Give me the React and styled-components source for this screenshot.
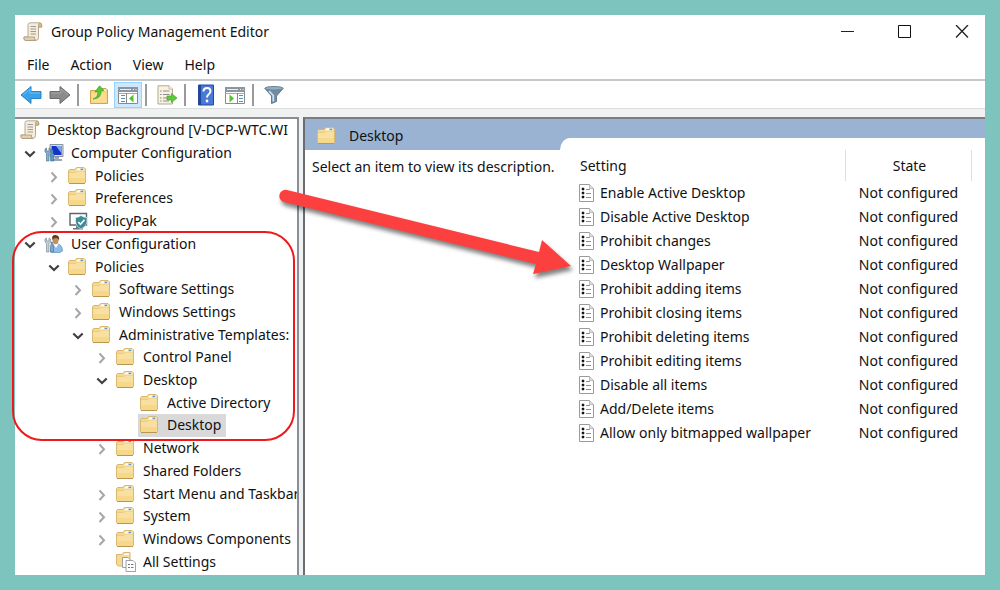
import React from "react";
import styled, { createGlobalStyle } from "styled-components";

const GlobalStyle = createGlobalStyle`
  * { box-sizing: border-box; }
  body {
    margin: 0;
    font-family: "Noto Sans", "Open Sans", sans-serif;
    font-size: 14px;
    line-height: 20px;
    color: #111;
  }
  button { font: inherit; color: inherit; border: 0; background: none; padding: 0; }
`;

const Page = styled.div`
  min-height: 100vh;
  padding: 15px;
  display: flex;
  background: #7dc4bf;
`;

const Window = styled.main`
  position: relative;
  flex: 1;
  min-width: 0;
  display: flex;
  flex-direction: column;
  background: #fff;
`;

const TitleBar = styled.header`
  display: flex;
  align-items: center;
  height: 34px;
  padding-left: 8px;
`;

const Title = styled.h1`
  flex: 1;
  margin: 0 0 0 8px;
  font-size: 14px;
  font-weight: 400;
`;

const CaptionButtons = styled.div`
  display: flex;
  margin-right: -5px;
`;

const CaptionButton = styled.button`
  width: 57px;
  height: 34px;
  display: flex;
  align-items: center;
  justify-content: center;
`;

const MenuBar = styled.nav`
  display: flex;
  align-items: center;
  gap: 21px;
  height: 30px;
  padding: 2px 0 0 12px;
`;

const MenuButton = styled.button`
  height: 24px;
`;

const Toolbar = styled.div`
  display: flex;
  align-items: center;
  gap: 1px;
  height: 30px;
  padding: 1px 2px 0;
  border-top: 2px solid #c6c9cb;
  border-bottom: 1px solid #dcdede;
`;

const ToolButton = styled.button`
  width: 28px;
  height: 26px;
  display: flex;
  align-items: center;
  justify-content: center;
  background: ${(p) => (p.$active ? "#cce8ff" : "transparent")};
  border: 1px solid ${(p) => (p.$active ? "#99d1ff" : "transparent")};
`;

const Divider = styled.span`
  width: 2px;
  height: 22px;
  margin: 0 5px 0 2px;
  background: #9a9a9a;
`;

const Workspace = styled.div`
  flex: 1;
  display: grid;
  grid-template-columns: 284px minmax(0, 1fr);
  column-gap: 4px;
  padding-top: 8px;
  background: #f0f1f1;
`;

const TreePane = styled.aside`
  min-width: 0;
  display: flex;
  background: #fff;
  border-top: 2px solid #8b8d92;
  border-right: 2px solid #8b8d98;
`;

const Tree = styled.ul`
  flex: 1;
  min-width: 0;
  margin: 0;
  padding: 0 0 2px;
  list-style: none;
  display: grid;
  grid-auto-rows: minmax(22px, 1fr);
  overflow: hidden;
`;

const TreeRow = styled.li`
  display: flex;
  align-items: stretch;
  padding-left: ${(p) => (p.$level ? p.$level * 24 - 16 : 3)}px;
  white-space: nowrap;
`;

const Twisty = styled.button`
  flex: none;
  width: 14px;
  margin-right: 5px;
  display: flex;
  align-items: center;
  justify-content: center;
`;

const TwistySpace = styled.span`
  flex: none;
  width: 19px;
`;

const Node = styled.button`
  display: flex;
  flex: none;
  align-items: center;
  gap: 7px;
  padding: 0 5px 0 2px;
  background: ${(p) => (p.$selected ? "#d9d9d9" : "transparent")};
`;

const Details = styled.section`
  min-width: 0;
  display: grid;
  grid-template-columns: 255px minmax(0, 1fr);
  background: #9ab3d2;
  border-top: 2px solid #7b7d80;
  border-left: 2px solid #6b6d72;
`;

const Description = styled.div`
  display: flex;
  flex-direction: column;
`;

const DetailsTitle = styled.h2`
  display: flex;
  align-items: center;
  gap: 12px;
  height: 31px;
  margin: 0;
  padding: 2px 0 0 12px;
  font-size: 14px;
  font-weight: 400;
`;

const DescriptionText = styled.p`
  flex: 1;
  margin: 0;
  padding: 7px 0 0 7px;
  background: #fff;
  white-space: nowrap;
`;

const Sheet = styled.div`
  margin-top: 19px;
  padding: 12px 13px 0 18px;
  background: #fff;
  border-top-left-radius: 10px 12px;
`;

const SettingsTable = styled.table`
  width: 100%;
  table-layout: fixed;
  border-collapse: collapse;
`;

const HeadCell = styled.th`
  width: ${(p) => p.$width || "auto"};
  height: 31px;
  padding: 0 0 0 2px;
  border-right: 1px solid #dedede;
  font-weight: 400;
  text-align: ${(p) => p.$align || "left"};
`;

const Cell = styled.td`
  height: 24px;
  padding: 0;
  text-align: ${(p) => p.$align || "left"};
  white-space: nowrap;
`;

const SettingName = styled.span`
  display: flex;
  align-items: center;
  gap: 6px;
`;

const Highlight = styled.div`
  position: absolute;
  left: -3px;
  top: 216px;
  width: 283px;
  height: 210px;
  border: 2px solid #f01818;
  border-radius: 30px;
  pointer-events: none;
`;

const Pointer = styled.svg`
  position: absolute;
  left: 255px;
  top: 165px;
  pointer-events: none;
  filter: drop-shadow(2px 4px 2px rgba(0, 0, 0, 0.5));
`;

const ScrollIcon = () => (
  <svg width="20" height="20" viewBox="0 0 20 20" aria-hidden="true">
    <path d="M5 2.500Q5.500.8 7.500.8H16Q18.700.8 18.700 3V5H15.500V15.500Q15.500 18.500 12.500 18.500H3Q1 18.500 1 16.500V15H5Z" fill="#f5edda" stroke="#b8a88f" />
    <path d="M1 15H11.500Q10.800 18 13 18.300L3 18.500Q1 18.500 1 16.500Z" fill="#e3d2ae" stroke="#a8977d" strokeWidth=".8" />
    <path d="M15.500 5V3Q15.700 1 17 1Q18.700 1.200 18.700 3V5Z" fill="#d8bd89" stroke="#a8977d" strokeWidth=".7" />
    <path d="M7.500 4.500H13M7.500 7H13M7.500 9.500H13M7.500 12H13" stroke="#9a9ba3" strokeWidth="1.100" />
  </svg>
);

const FolderShape = () => (
  <>
    <path d="M1.500 5L2.500 3.500H8L9.500 1.500H17L18.500 3V16.500L17.500 17.500H2.500L1.500 16.500Z" fill="#f5d98f" stroke="#d9b96f" />
    <path d="M10.500 2.300H16.500L17.500 3.500V5H9.200Z" fill="#fffdf2" />
    <path d="M13.500 2.600H16.300V4.200H13.500Z" fill="#5c97cd" />
    <path d="M2.300 6.500H8.500L10 5H17.700V16.500H2.300Z" fill="#fae0a0" />
    <path d="M2.300 12H17.700V16.700H2.300Z" fill="#f4d27d" opacity=".6" />
    <path d="M2 6.500H8.500L10 5H18" fill="none" stroke="#e6c67f" strokeWidth=".8" />
    <path d="M2 17.500H18" stroke="#b99651" />
  </>
);

const FolderIcon = () => (
  <svg width="20" height="20" viewBox="1 0 20 20" aria-hidden="true"><FolderShape /></svg>
);

const ComputerIcon = () => (
  <svg width="20" height="20" viewBox="0 0 20 20" aria-hidden="true">
    <path d="M6 1.500H19V13.500H6Z" fill="#d9dde3" stroke="#8c929c" />
    <path d="M7.500 3H17.600V12H7.500Z" fill="#1533c8" />
    <path d="M12 3H17.600V10.500Z" fill="#78a9ef" />
    <path d="M11 14H15V16H18V18H9V16H11Z" fill="#a1a7b0" />
    <path d="M1 6V9L2.500 10.500V18H5V10.500L6.500 9V6L5 5V8H2.500V5Z" fill="#87aeca" stroke="#587991" strokeWidth=".7" />
    <path d="M7 7H9V11H10V18H6.500V11H7Z" fill="#5698ca" stroke="#3d6f99" strokeWidth=".6" />
  </svg>
);

const UserIcon = () => (
  <svg width="20" height="20" viewBox="0 0 20 20" aria-hidden="true">
    <path d="M6.500 18Q7 11 10 10H14Q18.300 11 18.500 17L16 18.500H8Z" fill="#8dbce8" stroke="#5a8fbe" strokeWidth=".7" />
    <path d="M9.500 10L12 14L14.500 10Z" fill="#fff" />
    <ellipse cx="11.500" cy="6" rx="3" ry="4.200" fill="#c6905d" />
    <path d="M8.500 6Q7 .8 11.500 1Q16 1 15 7Q14.500 4 12 4Q9.500 4 8.500 6Z" fill="#5c3d27" />
    <path d="M1 5V8L2.500 9.500V18H5V9.500L6.500 8V5L5 4V7H2.500V4Z" fill="#c2ced8" stroke="#7b8f9f" strokeWidth=".7" />
    <path d="M7 8H8.500V11.500H9.500V18H6.500V11.500H7Z" fill="#82a6c3" stroke="#547793" strokeWidth=".6" />
  </svg>
);

const PolicyPakIcon = () => (
  <svg width="20" height="20" viewBox="0 0 20 20" aria-hidden="true">
    <path d="M2 2.500H18.500V14H2Z" fill="#fff" stroke="#5d666b" strokeWidth="1.400" />
    <path d="M8 14.500H12V17H15V18.500H5V17H8Z" fill="#6e777b" />
    <path d="M13 4.500Q15.500 6.500 19 6.500V10.500Q18.500 15.500 13 18Q8 15.500 7.500 10.500V6.500Q10.500 6.500 13 4.500Z" fill="#378d98" stroke="#fff" strokeWidth=".6" />
    <path d="M10.300 11L12.500 13.300L16.500 8.800" fill="none" stroke="#fff" strokeWidth="1.700" />
  </svg>
);

const AllSettingsIcon = () => (
  <svg width="20" height="20" viewBox="0 0 20 20" aria-hidden="true">
    <path d="M.5 2.500H6L7.500.5H14V14H2L.5 12.500Z" fill="#f6da91" stroke="#d9b96f" />
    <path d="M8.500 1.500H13V3H8Z" fill="#fff" />
    <path d="M6.500 5.500H12L14 7.500V15.500H6.500Z" fill="#fff" stroke="#a0a0a0" />
    <path d="M10 8.500H17L19.500 11V19.500H10Z" fill="#fff" stroke="#a0a0a0" />
    <path d="M12 12.500H14M15 12.500H17.500M12 15.500H14M15 15.500H17.500" stroke="#777" />
  </svg>
);

const PolicyIcon = () => (
  <svg width="16" height="20" viewBox="0 0 16 20" aria-hidden="true">
    <path d="M1.500 1.500H11.500L15.500 5.500V18.500H1.500Z" fill="#fff" stroke="#9a9a9a" />
    <path d="M11.500 1.500V5.500H15.500" fill="#e4e4e4" stroke="#bbb" />
    <path d="M4 5H6V7H4ZM4 9H6V11H4ZM4 13H6V15H4Z" fill="#151515" stroke="#151515" strokeWidth=".5" />
    <path d="M8 6.500H12M8 10.500H13M8 14.500H13" stroke="#8a90a0" strokeWidth="1.200" />
  </svg>
);

const ArrowIcon = ({ forward }) => (
  <svg width="22" height="20" viewBox="0 0 22 20" aria-hidden="true">
    <path
      d={forward ? "M1 6.500H11V1.500L21 10L11 18.500V13.500H1Z" : "M21 6.500H11V1.500L1 10L11 18.500V13.500H21Z"}
      fill={forward ? "#8b8b8b" : "#37a1e9"}
      stroke={forward ? "#6b6b6b" : "#2a83c8"}
    />
    <path d={forward ? "M2 8H12V4L19 10" : "M20 8H10V4L3 10"} fill="none" stroke={forward ? "#a5a5a5" : "#6cc0f6"} />
  </svg>
);

const FolderUpIcon = () => (
  <svg width="20" height="20" viewBox="0 0 20 20" aria-hidden="true">
    <path d="M1.500 5.500H8L9.500 3.500H17L18.500 5V18.500H1.500Z" fill="#f7d27c" stroke="#cfa64e" />
    <path d="M2.300 8H17.700V17.700H2.300Z" fill="#fbdc92" />
    <path d="M12.500 4.500H17V6H12.500Z" fill="#fff8dc" />
    <path d="M4 14Q9.500 12.500 8.800 6.500L6 7L10.500.8L15 5.500L12 6Q12.500 13.500 4 14Z" fill="#58c936" stroke="#3b9f25" strokeWidth=".7" />
  </svg>
);

const PaneIcon = ({ right }) => (
  <svg width="22" height="20" viewBox="0 0 22 20" aria-hidden="true">
    <path d="M1.500 2.500H20.500V18.500H1.500Z" fill="#fff" stroke="#87898b" />
    <path d="M1 2H21V7H1Z" fill="#8d969e" />
    <path d="M3 4.500H14M16 4.500H17M18.500 4.500H19.500" stroke="#e9eef2" />
    <path d="M1.500 8.500H20.500" stroke="#a6a9ab" />
    <path d={right ? "M13.500 8V18.500" : "M9.500 8V18.500"} stroke="#888" />
    <path d={right ? "M15 10.500H19M15 13.500H19M15 16.500H19" : "M4 10.500H8M4 13.500H8M4 16.500H8"} stroke="#5891bd" />
    <path d={right ? "M5.500 9.500L10 13.500L5.500 17.500Z" : "M16.500 9.500L12 13.500L16.500 17.500Z"} fill="#4fc42c" />
  </svg>
);

const ExportIcon = () => (
  <svg width="22" height="20" viewBox="0 0 22 20" aria-hidden="true">
    <path d="M2 .8H13L16.500 4V19H2Z" fill="#faf2dd" stroke="#b3a995" />
    <path d="M13 1V4H16.500" fill="#fff" stroke="#b3a995" strokeWidth=".8" />
    <path d="M4 6H5.500M7 6H13.500M4 9.500H5.500M7 9.500H13.500M4 13H5.500M7 13H11M4 16H5.500M7 16H13" stroke="#8c8f99" strokeWidth="1.200" />
    <path d="M11 11H15.500V8.500L21 13L15.500 17.500V15H11Z" fill="#5bcb39" stroke="#43a72a" strokeWidth=".7" />
  </svg>
);

const HelpIcon = () => (
  <svg width="18" height="22" viewBox="0 0 18 22" aria-hidden="true">
    <path d="M1.500 1H16.500V21H1.500Z" fill="#4a78d6" stroke="#234a9c" />
    <path d="M2 1H4V21H2Z" fill="#1f449b" />
    <path d="M6.500 7.500Q6.500 4 10 4Q13.500 4 13.500 7.300Q13.500 9 11.500 10.500Q10 11.700 10 13.500" fill="none" stroke="#fff" strokeWidth="2" />
    <circle cx="10" cy="17" r="1.400" fill="#fff" />
  </svg>
);

const FilterIcon = () => (
  <svg width="20" height="20" viewBox="0 0 20 20" aria-hidden="true">
    <path d="M1 3.500L7.500 11V18.500L12.500 16.500V11L19 3.500Z" fill="#6f8da5" stroke="#637c90" />
    <path d="M5 6L9.300 10.500V16.500" fill="none" stroke="#d1e0e9" strokeWidth="1.800" />
    <ellipse cx="10" cy="3.300" rx="9.200" ry="1.800" fill="#94aec0" stroke="#68849a" />
  </svg>
);

const Chevron = ({ open }) => (
  <svg width="12" height="14" viewBox="0 0 12 14" fill="none" aria-hidden="true">
    {open ? (
      <path d="M1.300 5.500L6 10L10.700 5.500" stroke="#404040" strokeWidth="2.200" />
    ) : (
      <path d="M3.500 3.500L8 8.200L3.500 13" stroke="#a6a6a6" strokeWidth="2" />
    )}
  </svg>
);

const tree = [
  { label: "Desktop Background [V-DCP-WTC.WI", level: 0, icon: ScrollIcon },
  { label: "Computer Configuration", level: 1, open: true, icon: ComputerIcon },
  { label: "Policies", level: 2, open: false },
  { label: "Preferences", level: 2, open: false },
  { label: "PolicyPak", level: 2, open: false, icon: PolicyPakIcon },
  { label: "User Configuration", level: 1, open: true, icon: UserIcon },
  { label: "Policies", level: 2, open: true },
  { label: "Software Settings", level: 3, open: false },
  { label: "Windows Settings", level: 3, open: false },
  { label: "Administrative Templates:", level: 3, open: true },
  { label: "Control Panel", level: 4, open: false },
  { label: "Desktop", level: 4, open: true },
  { label: "Active Directory", level: 5 },
  { label: "Desktop", level: 5, selected: true },
  { label: "Network", level: 4, open: false },
  { label: "Shared Folders", level: 4 },
  { label: "Start Menu and Taskbar", level: 4, open: false },
  { label: "System", level: 4, open: false },
  { label: "Windows Components", level: 4, open: false },
  { label: "All Settings", level: 4, icon: AllSettingsIcon },
];

const settings = [
  "Enable Active Desktop",
  "Disable Active Desktop",
  "Prohibit changes",
  "Desktop Wallpaper",
  "Prohibit adding items",
  "Prohibit closing items",
  "Prohibit deleting items",
  "Prohibit editing items",
  "Disable all items",
  "Add/Delete items",
  "Allow only bitmapped wallpaper",
];

const TreeItem = ({ label, level, open, selected, icon: Icon = FolderIcon }) => (
  <TreeRow $level={level} role="treeitem" aria-level={level + 1} aria-expanded={open} aria-selected={!!selected}>
    {open !== undefined && (
      <Twisty aria-label={`${open ? "Collapse" : "Expand"} ${label}`}><Chevron open={open} /></Twisty>
    )}
    {open === undefined && level > 0 && <TwistySpace />}
    <Node $selected={selected}><Icon />{label}</Node>
  </TreeRow>
);

export default function App() {
  return (
    <Page>
      <GlobalStyle />
      <Window>
        <TitleBar>
          <ScrollIcon />
          <Title>Group Policy Management Editor</Title>
          <CaptionButtons>
            <CaptionButton aria-label="Minimize">
              <svg width="14" height="14" viewBox="0 0 14 14"><path d="M0 6.500H13" stroke="#222" /></svg>
            </CaptionButton>
            <CaptionButton aria-label="Maximize">
              <svg width="14" height="14" viewBox="0 0 14 14"><path d="M.5.500H12.500V12.500H.500Z" fill="none" stroke="#111" /></svg>
            </CaptionButton>
            <CaptionButton aria-label="Close">
              <svg width="14" height="14" viewBox="0 0 14 14"><path d="M1 0L13 12.500M13 0L1 12.500" stroke="#222" strokeWidth="1.300" /></svg>
            </CaptionButton>
          </CaptionButtons>
        </TitleBar>
        <MenuBar aria-label="Menu">
          <MenuButton>File</MenuButton>
          <MenuButton>Action</MenuButton>
          <MenuButton>View</MenuButton>
          <MenuButton>Help</MenuButton>
        </MenuBar>
        <Toolbar role="toolbar" aria-label="Tools">
          <ToolButton aria-label="Back"><ArrowIcon /></ToolButton>
          <ToolButton aria-label="Forward"><ArrowIcon forward /></ToolButton>
          <Divider />
          <ToolButton aria-label="Up one level"><FolderUpIcon /></ToolButton>
          <ToolButton $active aria-label="Show console tree" aria-pressed="true"><PaneIcon /></ToolButton>
          <Divider />
          <ToolButton aria-label="Export list"><ExportIcon /></ToolButton>
          <Divider />
          <ToolButton aria-label="Help"><HelpIcon /></ToolButton>
          <ToolButton aria-label="Show action pane"><PaneIcon right /></ToolButton>
          <Divider />
          <ToolButton aria-label="Filter"><FilterIcon /></ToolButton>
        </Toolbar>
        <Workspace>
          <TreePane>
            <Tree role="tree" aria-label="Console tree">
              {tree.map((item, i) => <TreeItem key={i} {...item} />)}
            </Tree>
          </TreePane>
          <Details>
            <Description>
              <DetailsTitle><FolderIcon />Desktop</DetailsTitle>
              <DescriptionText>Select an item to view its description.</DescriptionText>
            </Description>
            <Sheet>
              <SettingsTable>
                <thead>
                  <tr>
                    <HeadCell scope="col">Setting</HeadCell>
                    <HeadCell scope="col" $width="126px" $align="center">State</HeadCell>
                  </tr>
                </thead>
                <tbody>
                  {settings.map((name) => (
                    <tr key={name}>
                      <Cell><SettingName><PolicyIcon />{name}</SettingName></Cell>
                      <Cell $align="center">Not configured</Cell>
                    </tr>
                  ))}
                </tbody>
              </SettingsTable>
            </Sheet>
          </Details>
        </Workspace>
        <Highlight />
        <Pointer width="320" height="130" viewBox="0 0 320 130" aria-hidden="true">
          <path d="M17 10L269 72L272 60L301 86L263 94L266 84L14 22A6 6 0 0 1 17 10Z" fill="#fc4040" />
        </Pointer>
      </Window>
    </Page>
  );
}
